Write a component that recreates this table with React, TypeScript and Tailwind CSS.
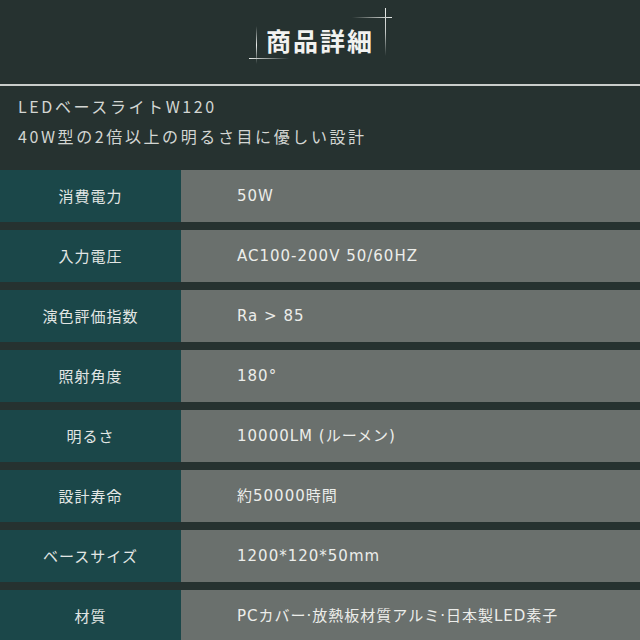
const specs: [string, string][] = [
  ["消費電力", "50W"],
  ["入力電圧", "AC100-200V 50/60HZ"],
  ["演色評価指数", "Ra > 85"],
  ["照射角度", "180°"],
  ["明るさ", "10000LM (ルーメン)"],
  ["設計寿命", "約50000時間"],
  ["ベースサイズ", "1200*120*50mm"],
  ["材質", "PCカバー·放熱板材質アルミ·日本製LED素子"],
];

export default function App() {
  return (
    <div
      className="h-[640px] w-[640px] overflow-hidden bg-[#263230] text-[#e4e6e4]"
      style={{ fontFamily: '"Noto Sans CJK JP", "Noto Sans", sans-serif' }}
    >
      {/* Header */}
      <div className="relative flex h-[84px] items-center justify-center">
        <h1 className="pb-[2px] text-[25px] font-bold tracking-[2px] text-[#f2f2f0]">商品詳細</h1>
        {/* sparkle, bottom left */}
        <div className="absolute left-[256px] top-[26px] h-[38px] w-px bg-gradient-to-b from-transparent via-[#e8ecea] to-transparent" />
        <div className="absolute left-[249px] top-[58px] h-px w-[40px] bg-gradient-to-r from-[#e8ecea] via-[#8f9592] to-transparent" />
        {/* sparkle, top right */}
        <div className="absolute left-[385px] top-[8px] h-[48px] w-px bg-gradient-to-b from-[#e8ecea] via-[#c4c8c6] to-transparent" />
        <div className="absolute left-[352px] top-[17px] h-px w-[40px] bg-gradient-to-l from-[#e8ecea] via-[#8f9592] to-transparent" />
      </div>
      <div className="h-[2px] bg-[#c9cdca]" />

      {/* Subtitle */}
      <div className="flex h-[84px] flex-col gap-[8px] pl-[18px] pt-[9px] text-[16px] tracking-[2.6px] text-[#d3d6d3]">
        <p className="leading-[22px]">LEDベースライトW120</p>
        <p className="leading-[22px]">40W型の2倍以上の明るさ目に優しい設計</p>
      </div>

      {/* Spec table */}
      <div className="flex flex-col gap-[8px]">
        {specs.map(([label, value]) => (
          <div key={label} className="flex h-[52px] shrink-0">
            <div className="flex w-[181px] items-center justify-center bg-[#1b4749] text-[15px] tracking-[1px] text-[#e2e6e4]">
              {label}
            </div>
            <div
              className="flex flex-1 items-center bg-[#6a706d] pl-[56px] text-[15px] tracking-[1px] text-[#ecedea]"
              style={{ fontFamily: '"DejaVu Sans", "Noto Sans CJK JP", sans-serif' }}
            >
              {value}
            </div>
          </div>
        ))}
      </div>
    </div>
  );
}
